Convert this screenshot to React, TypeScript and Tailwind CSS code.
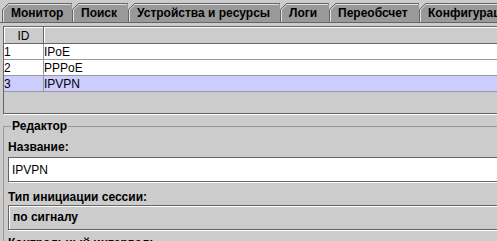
import React from 'react';

const tabs = [
  { label: 'Монитор', w: 70, cls: 'w-[70px]' },
  { label: 'Поиск', w: 56, cls: 'w-[56px]' },
  { label: 'Устройства и ресурсы', w: 152, cls: 'w-[152px]' },
  { label: 'Логи', w: 49, cls: 'w-[49px]' },
  { label: 'Переобсчет', w: 90, cls: 'w-[90px]' },
  { label: 'Конфигурация', w: 110, cls: 'w-[110px]' },
];

const rows = [
  { id: 1, name: 'IPoE' },
  { id: 2, name: 'PPPoE' },
  { id: 3, name: 'IPVPN', selected: true },
];

const Tab: React.FC<{ label: string; w: number; cls: string }> = ({ label, w, cls }) => (
  <div className={`relative h-[19px] shrink-0 ${cls}`}>
    <svg className="absolute inset-0" width={w} height={19}>
      <path d={`M0.5 19 V6.5 L6.5 0.5 H${w} V19 Z`} fill="#999999" />
      <path d={`M0.5 19 V6.5 L6.5 0.5 H${w}`} fill="none" stroke="#666666" />
      <path d={`M1.5 19 V6.9 L6.9 1.5 H${w - 1}`} fill="none" stroke="#ffffff" strokeOpacity="0.7" />
    </svg>
    <span className="relative block pl-[9px] pt-[2px] leading-[14px] mt-[1px] font-bold text-[12px] text-black whitespace-nowrap">
      {label}
    </span>
  </div>
);

const App: React.FC = () => {
  return (
    <div className="w-[497px] h-[241px] overflow-hidden bg-[#cccccc] font-['Liberation_Sans',Arial,sans-serif] text-[12px] text-black">
      <div className="w-[560px]">
        {/* tab strip */}
        <div className="flex pl-[2px] pt-[3px] h-[22px]">
          {tabs.map((t) => (
            <Tab key={t.label} {...t} />
          ))}
        </div>
        <div className="h-px bg-[#666666]" />

        {/* table */}
        <div className="ml-[3px] mt-[3px] h-[88px] border border-[#666666] shadow-[1px_1px_0_#ffffff] flex flex-col">
          <div className="flex h-[17px] border-b border-[#666666]">
            <div className="w-[40px] border-r border-[#666666] text-center leading-[14px] pt-[2px] shadow-[inset_1px_1px_0_#ffffff]">
              ID
            </div>
            <div className="flex-1 shadow-[inset_1px_1px_0_#ffffff]" />
          </div>
          {rows.map((r) => (
            <div
              key={r.id}
              className={`flex h-[16px] border-b border-[#999999] ${r.selected ? 'bg-[#ccccff]' : 'bg-white'}`}
            >
              <div className="w-[40px] border-r border-[#999999] leading-[14px] pt-[1px]">{r.id}</div>
              <div className="flex-1 leading-[14px] pt-[1px]">{r.name}</div>
            </div>
          ))}
          <div className="flex-1" />
        </div>

        {/* editor */}
        <fieldset className="ml-[3px] mt-[5px] border-l border-t border-[#999999] pl-[4px]">
          <legend className="ml-[3px] px-[1px] leading-[14px] font-bold">Редактор</legend>
          <div className="mt-[7px] leading-[14px] font-bold">Название:</div>
          <div className="mt-[3px] h-[25px] border border-[#666666] bg-white shadow-[1px_1px_0_#ffffff] pl-[3px] pt-[5px] leading-[14px]">
            IPVPN
          </div>
          <div className="mt-[8px] leading-[14px] font-bold">Тип инициации сессии:</div>
          <div className="mt-[1px] h-[25px] border border-[#666666] bg-[#cccccc] shadow-[1px_1px_0_#ffffff,inset_1px_1px_0_#ffffff] pl-[4px] pt-[4px] leading-[14px] font-bold">
            по сигналу
          </div>
          <div className="mt-[6px] leading-[14px] font-bold">Контрольный интервал:</div>
        </fieldset>
      </div>
    </div>
  );
};

export default App;
